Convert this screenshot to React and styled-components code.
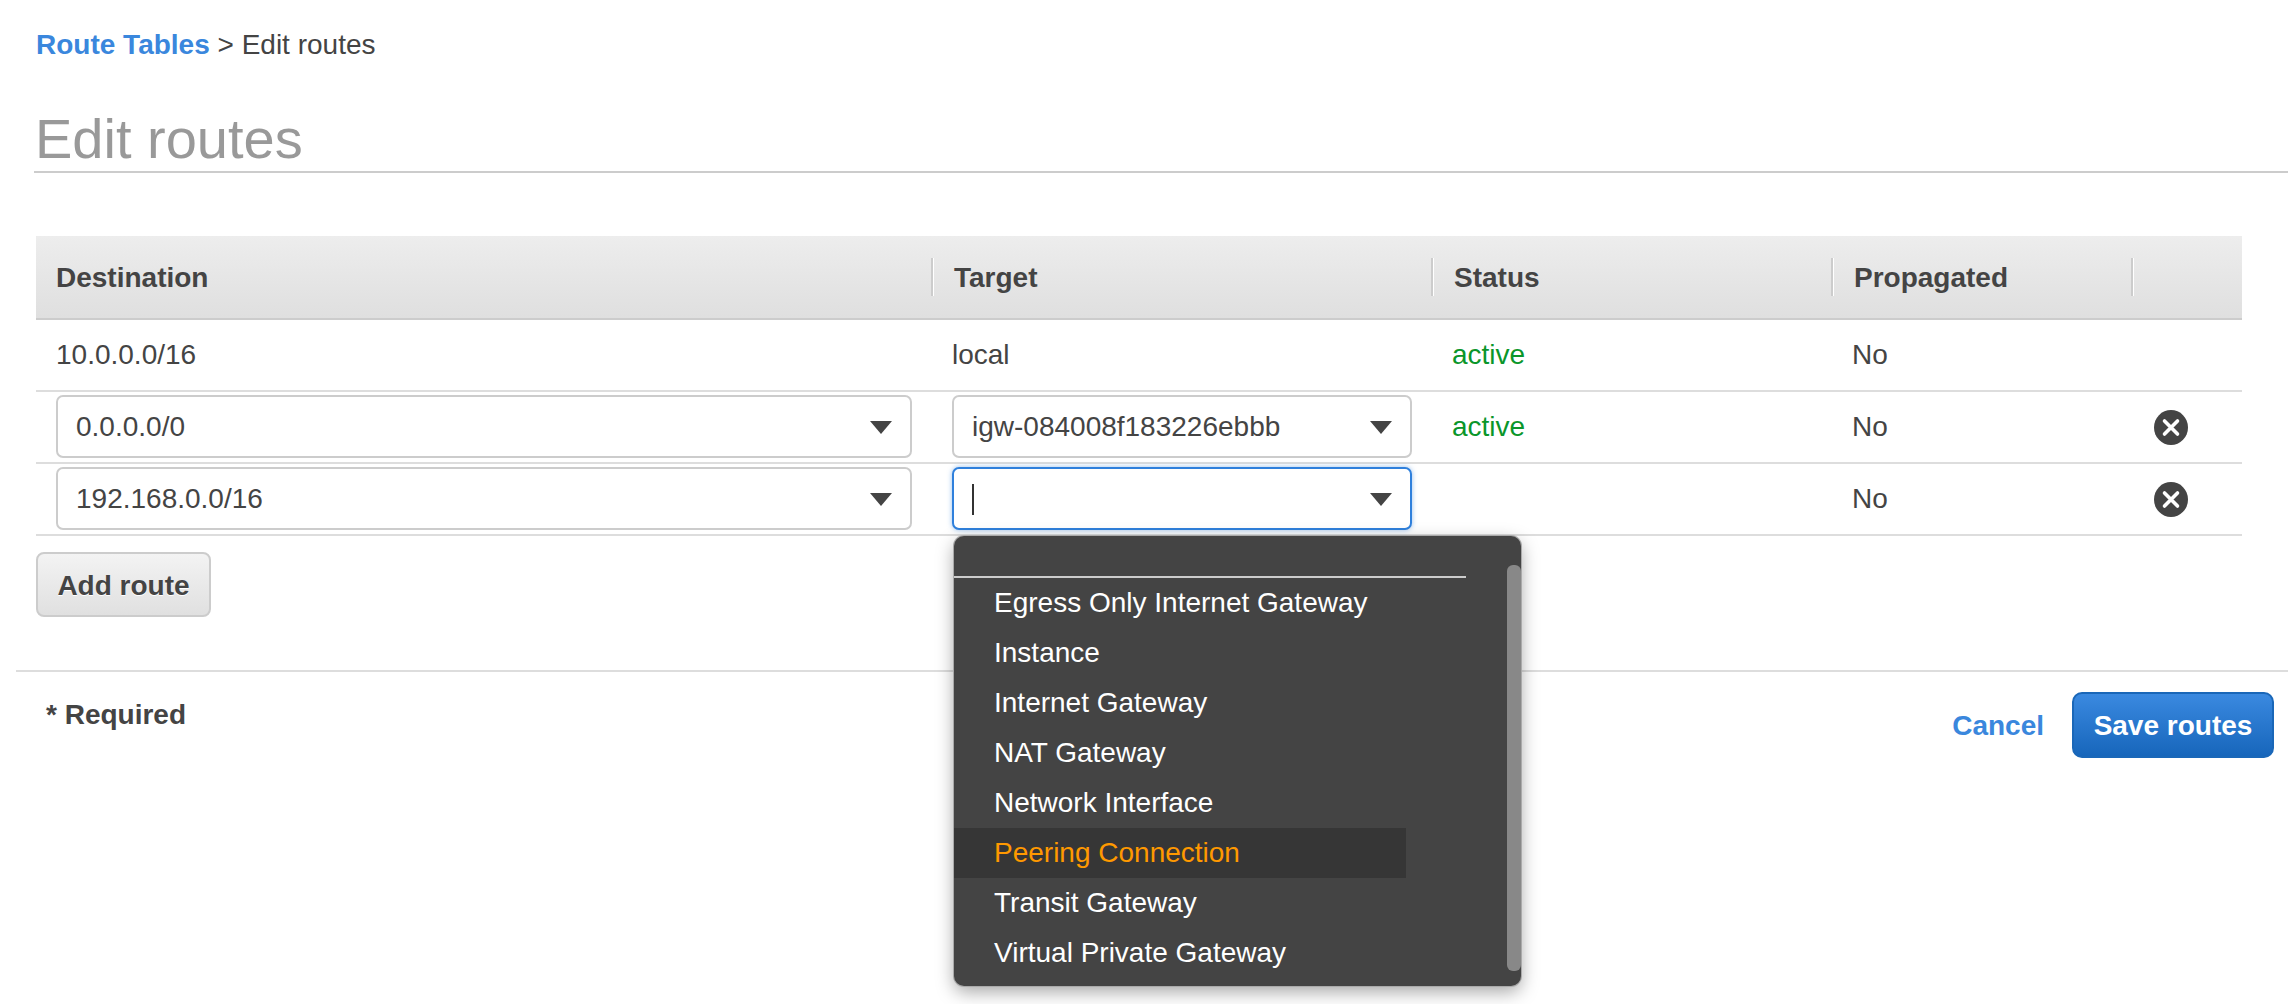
import React from 'react';
import styled, { createGlobalStyle } from 'styled-components';

const GlobalStyle = createGlobalStyle`
    html, body {
        margin: 0;
        padding: 0;
        background: #fff;
    }
    body {
        font-family: "Liberation Sans", Arial, sans-serif;
        font-size: 28px;
        line-height: 32px;
        color: #444;
        overflow: hidden;
    }
`;

const menuItems = [
    'Egress Only Internet Gateway',
    'Instance',
    'Internet Gateway',
    'NAT Gateway',
    'Network Interface',
    'Peering Connection',
    'Transit Gateway',
    'Virtual Private Gateway',
];

const RemoveIcon = () => (
    <svg width="34" height="35" viewBox="0 0 34 35" aria-hidden="true">
        <ellipse cx="17" cy="17.5" rx="17" ry="17.5" fill="#444" />
        <path d="M10.5 11 L23.5 24 M23.5 11 L10.5 24" stroke="#fff" strokeWidth="3.6" strokeLinecap="round" />
    </svg>
);

const App = () => {
    return (
        <Page>
            <GlobalStyle />
            <Breadcrumb>
                <Crumb>Route Tables</Crumb> &gt; Edit routes
            </Breadcrumb>
            <Title>Edit routes</Title>

            <Table>
                <HeadRow>
                    <HeadCell>Destination</HeadCell>
                    <HeadCell>Target</HeadCell>
                    <HeadCell>Status</HeadCell>
                    <HeadCell>Propagated</HeadCell>
                    <HeadCell />
                </HeadRow>
                <Row>
                    <Cell>10.0.0.0/16</Cell>
                    <Cell>local</Cell>
                    <Cell><Active>active</Active></Cell>
                    <Cell>No</Cell>
                    <Cell />
                </Row>
                <Row>
                    <Cell>
                        <Select>0.0.0.0/0<Arrow /></Select>
                    </Cell>
                    <Cell>
                        <Select>igw-084008f183226ebbb<Arrow /></Select>
                    </Cell>
                    <Cell><Active>active</Active></Cell>
                    <Cell>No</Cell>
                    <Cell><RemoveIcon /></Cell>
                </Row>
                <Row>
                    <Cell>
                        <Select>192.168.0.0/16<Arrow /></Select>
                    </Cell>
                    <Cell>
                        <Select $focused>
                            <Caret />
                            <Arrow />
                            <Menu>
                                <MenuTop />
                                {menuItems.map((item) => (
                                    <MenuItem key={item} $active={item === 'Peering Connection'}>{item}</MenuItem>
                                ))}
                                <Scrollbar />
                            </Menu>
                        </Select>
                    </Cell>
                    <Cell />
                    <Cell>No</Cell>
                    <Cell><RemoveIcon /></Cell>
                </Row>
            </Table>

            <AddButton type="button">Add route</AddButton>

            <Footer>
                <Required>* Required</Required>
                <Actions>
                    <CancelLink>Cancel</CancelLink>
                    <SaveButton type="button">Save routes</SaveButton>
                </Actions>
            </Footer>
        </Page>
    );
};

const Page = styled.div`
    width: 2288px;
    height: 1004px;
    padding-top: 29px;
    box-sizing: border-box;
`;

const Breadcrumb = styled.div`
    padding-left: 36px;
`;

const Crumb = styled.a`
    color: #3a87dd;
    font-weight: 700;
`;

const Title = styled.h1`
    margin: 46px 0 0 34px;
    padding: 0 0 0 1px;
    font-size: 56px;
    line-height: 64px;
    font-weight: 400;
    color: #999;
    border-bottom: 2px solid #ccc;
`;

const Table = styled.div`
    margin: 63px 0 0 36px;
    width: 2206px;
`;

const columns = '895px 500px 400px 300px 111px';

const HeadRow = styled.div`
    display: grid;
    grid-template-columns: ${columns};
    align-items: center;
    height: 84px;
    box-sizing: border-box;
    background: linear-gradient(#ededed, #dfdfdf);
    border-bottom: 2px solid #ccc;
`;

const HeadCell = styled.div`
    height: 38px;
    box-sizing: border-box;
    display: flex;
    align-items: center;
    padding: 2px 0 0 21px;
    font-weight: 700;
    border-left: 2px solid #ccc;
    box-shadow: inset 1px 0 0 #fff;

    &:first-child {
        border-left: 0;
        box-shadow: none;
        padding-left: 20px;
    }
`;

const Row = styled.div`
    display: grid;
    grid-template-columns: ${columns};
    align-items: center;
    height: 72px;
    box-sizing: border-box;
    border-bottom: 2px solid #ddd;
`;

const Cell = styled.div`
    display: flex;
    align-items: center;
    padding: 0 19px 0 21px;

    &:first-child {
        padding: 0 19px 0 20px;
    }
    &:last-child {
        padding-left: 23px;
    }
`;

const Active = styled.span`
    color: #0a962a;
`;

const Select = styled.div`
    position: relative;
    display: flex;
    align-items: center;
    justify-content: space-between;
    width: 100%;
    height: 63px;
    margin-top: -2px;
    padding: 2px 18px 0;
    box-sizing: border-box;
    background: #fff;
    border: 2px solid ${(props) => (props.$focused ? '#2f80dc' : '#ccc')};
    border-radius: 7px;
    box-shadow: ${(props) => (props.$focused ? '0 0 5px rgba(47, 128, 220, 0.5)' : 'none')};
`;

const Arrow = styled.span`
    width: 0;
    height: 0;
    border-top: 13px solid #444;
    border-left: 11px solid transparent;
    border-right: 11px solid transparent;
`;

const Caret = styled.span`
    width: 2px;
    height: 31px;
    background: #333;
`;

const Menu = styled.div`
    position: absolute;
    top: 67px;
    left: 0;
    z-index: 5;
    width: 567px;
    height: 450px;
    overflow: hidden;
    background: #444;
    border-radius: 10px;
    box-shadow: 0 0 0 1px #aaa, 0 6px 18px rgba(0, 0, 0, 0.35);
`;

const MenuTop = styled.div`
    width: 512px;
    height: 40px;
    border-bottom: 2px solid #ccc;
`;

const MenuItem = styled.div`
    width: 452px;
    height: 50px;
    display: flex;
    align-items: center;
    padding-left: 40px;
    box-sizing: border-box;
    color: ${(props) => (props.$active ? '#f90' : '#fff')};
    background: ${(props) => (props.$active ? '#363636' : 'transparent')};
    white-space: nowrap;
`;

const Scrollbar = styled.div`
    position: absolute;
    top: 29px;
    right: 0;
    width: 14px;
    height: 406px;
    background: #888;
    border-radius: 6px;
`;

const AddButton = styled.button`
    display: block;
    margin: 16px 0 0 36px;
    width: 175px;
    height: 65px;
    padding: 3px 0 0;
    font: 700 28px/32px "Liberation Sans", Arial, sans-serif;
    color: #444;
    text-shadow: 0 1px 0 #fff;
    background: linear-gradient(#f3f3f3, #e0e0e0);
    border: 2px solid #ccc;
    border-radius: 8px;
`;

const Footer = styled.div`
    display: flex;
    justify-content: space-between;
    align-items: flex-start;
    margin: 53px 0 0 16px;
    padding: 20px 14px 0 30px;
    border-top: 2px solid #ddd;
`;

const Required = styled.div`
    padding-top: 7px;
    font-weight: 700;
`;

const Actions = styled.div`
    display: flex;
    align-items: center;
    gap: 28px;
`;

const CancelLink = styled.a`
    padding-top: 2px;
    color: #3a87dd;
    font-weight: 700;
`;

const SaveButton = styled.button`
    width: 202px;
    height: 66px;
    padding: 2px 0 0;
    font: 700 28px/32px "Liberation Sans", Arial, sans-serif;
    color: #fff;
    background: linear-gradient(#3a89e0, #1766bb);
    border: 2px solid #1a67b8;
    border-radius: 10px;
`;

export default App;
